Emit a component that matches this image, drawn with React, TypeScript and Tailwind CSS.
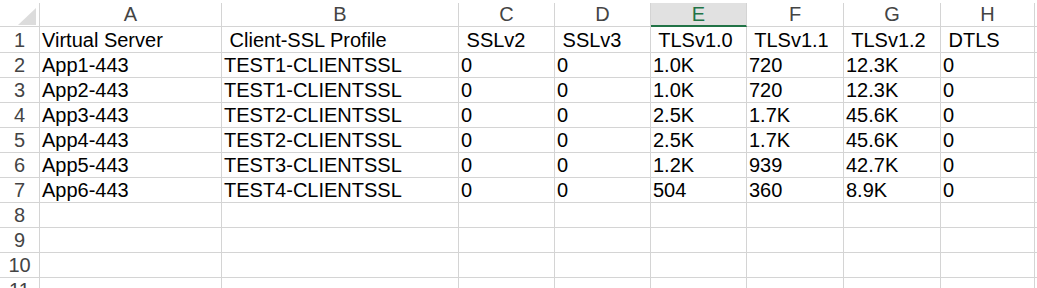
const columns = [
  { letter: "A", width: "w-[182px]" },
  { letter: "B", width: "w-[237px]" },
  { letter: "C", width: "w-[96px]" },
  { letter: "D", width: "w-[96px]" },
  { letter: "E", width: "w-[96px]" },
  { letter: "F", width: "w-[97px]" },
  { letter: "G", width: "w-[97px]" },
  { letter: "H", width: "w-[94px]" },
];

const rows: string[][] = [
  ["Virtual Server", " Client-SSL Profile", " SSLv2", " SSLv3", " TLSv1.0", " TLSv1.1", " TLSv1.2", " DTLS"],
  ["App1-443", "TEST1-CLIENTSSL", "0", "0", "1.0K", "720", "12.3K", "0"],
  ["App2-443", "TEST1-CLIENTSSL", "0", "0", "1.0K", "720", "12.3K", "0"],
  ["App3-443", "TEST2-CLIENTSSL", "0", "0", "2.5K", "1.7K", "45.6K", "0"],
  ["App4-443", "TEST2-CLIENTSSL", "0", "0", "2.5K", "1.7K", "45.6K", "0"],
  ["App5-443", "TEST3-CLIENTSSL", "0", "0", "1.2K", "939", "42.7K", "0"],
  ["App6-443", "TEST4-CLIENTSSL", "0", "0", "504", "360", "8.9K", "0"],
  ["", "", "", "", "", "", "", ""],
  ["", "", "", "", "", "", "", ""],
  ["", "", "", "", "", "", "", ""],
  ["", "", "", "", "", "", "", ""],
];

export default function App() {
  return (
    <div className="w-[1037px] h-[288px] overflow-hidden bg-white font-['Liberation_Sans',Arial,sans-serif] text-[20px] text-black">
      {/* column header row */}
      <div className="flex h-[27px] pt-[3px] border-b border-[#d4d4d4]">
        <div className="w-[40px] shrink-0 border-r border-[#d4d4d4] relative">
          <svg className="absolute left-[18px] top-[5px]" width="18" height="17" viewBox="0 0 18 17">
            <polygon points="18,0 18,17 0,17" fill="#dcdcdc" />
          </svg>
        </div>
        {columns.map((col) => (
          <div
            key={col.letter}
            className={`${col.width} shrink-0 border-r border-[#d4d4d4] flex items-center justify-center leading-[23px] ${
              col.letter === "E"
                ? "bg-[#e1e1e1] text-[#217346] border-b-2 border-b-[#217346] -mb-px"
                : "text-[#444]"
            }`}
          >
            {col.letter}
          </div>
        ))}
      </div>

      {/* data rows */}
      {rows.map((cells, i) => (
        <div
          key={i}
          className={`flex border-b border-[#d4d4d4] ${i === 0 ? "h-[26px]" : "h-[25px]"}`}
        >
          <div className="w-[40px] shrink-0 border-r border-[#d4d4d4] flex items-end justify-center leading-[23px] text-[#444]">
            {i + 1}
          </div>
          {cells.map((text, j) => (
            <div
              key={j}
              className={`${columns[j].width} shrink-0 border-r border-[#d4d4d4] flex items-end pl-[2px] leading-[23px] whitespace-pre overflow-hidden`}
            >
              {text}
            </div>
          ))}
        </div>
      ))}
    </div>
  );
}
